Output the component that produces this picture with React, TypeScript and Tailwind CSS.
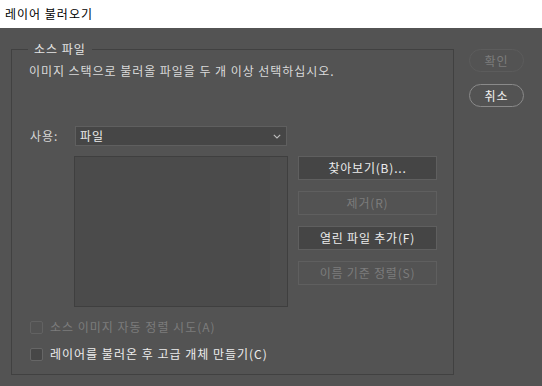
import React from "react";

const font = { fontFamily: '"Noto Sans CJK KR", "Noto Sans", sans-serif' };

function Btn({ label, disabled }: { label: string; disabled?: boolean }) {
  return (
    <div
      className={
        "h-[24px] w-[139px] flex items-center justify-center border text-[12px] leading-none tracking-[0.8px] " +
        (disabled
          ? "border-[#5f5f5f] bg-[#535353] text-[#7c7c7c]"
          : "border-[#5f5f5f] bg-[#454545] text-[#ececec]")
      }
    >
      {label}
    </div>
  );
}

function Check({ label, disabled }: { label: string; disabled?: boolean }) {
  return (
    <div className="flex items-center h-[14px]">
      <div
        className={
          "w-[13px] h-[13px] rounded-[2px] border " +
          (disabled ? "border-[#626262] bg-[#535353]" : "border-[#666666] bg-[#474747]")
        }
      />
      <span
        className={
          "ml-[7px] text-[12px] leading-none tracking-[1px] " + (disabled ? "text-[#7c7c7c]" : "text-[#ececec]")
        }
      >
        {label}
      </span>
    </div>
  );
}

export default function App() {
  return (
    <div className="w-[542px] h-[386px] bg-[#535353] flex flex-col overflow-hidden" style={font}>
      <div className="h-[28px] bg-white flex items-center pl-[5px] text-[12px] tracking-[1px] text-black shrink-0">
        레이어 불러오기
      </div>
      <div className="flex">
        <div className="relative ml-[11px] mt-[21px] w-[443px] h-[326px] border border-[#414141]">
          <span className="absolute left-[16px] top-[-9px] bg-[#535353] px-[6px] text-[12px] leading-[16px] tracking-[1px] text-[#e4e4e4]">
            소스 파일
          </span>
          <div className="pl-[17px] pt-[14px] text-[12px] leading-[14px] tracking-[0.95px] text-[#dadada]">
            이미지 스택으로 불러올 파일을 두 개 이상 선택하십시오.
          </div>
          <div className="flex items-center mt-[48px] pl-[18px]">
            <span className="w-[45px] text-[12px] tracking-[1px] text-[#d6d6d6]">사용:</span>
            <div className="w-[212px] h-[20px] bg-[#464646] border border-[#5f5f5f] flex items-center justify-between pl-[4px] pr-[5px]">
              <span className="text-[12px] text-[#ececec] leading-none tracking-[1px]">파일</span>
              <svg width="8" height="5" viewBox="0 0 8 5">
                <path d="M0.8 0.8 L4 4 L7.2 0.8" fill="none" stroke="#bdbdbd" strokeWidth="1.1" />
              </svg>
            </div>
          </div>
          <div className="flex mt-[10px] pl-[62px]">
            <div className="w-[214px] h-[151px] bg-[#4b4b4b] border border-[#3f3f3f] flex justify-end">
              <div className="w-[17px] h-full bg-[#4e4e4e]" />
            </div>
            <div className="ml-[10px] flex flex-col gap-[11px]">
              <Btn label="찾아보기(B)..." />
              <Btn label="제거(R)" disabled />
              <Btn label="열린 파일 추가(F)" />
              <Btn label="이름 기준 정렬(S)" disabled />
            </div>
          </div>
          <div className="flex flex-col gap-[13px] mt-[13px] pl-[18px]">
            <Check label="소스 이미지 자동 정렬 시도(A)" disabled />
            <Check label="레이어를 불러온 후 고급 개체 만들기(C)" />
          </div>
        </div>
        <div className="ml-[15px] mt-[21px] flex flex-col gap-[12px]">
          <div className="w-[55px] h-[23px] rounded-full border border-[#5c5c5c] flex items-center justify-center text-[12px] tracking-[1px] text-[#7c7c7c]">
            확인
          </div>
          <div className="w-[55px] h-[23px] rounded-full border border-[#8a8a8a] flex items-center justify-center text-[12px] tracking-[1px] text-[#f0f0f0]">
            취소
          </div>
        </div>
      </div>
    </div>
  );
}
